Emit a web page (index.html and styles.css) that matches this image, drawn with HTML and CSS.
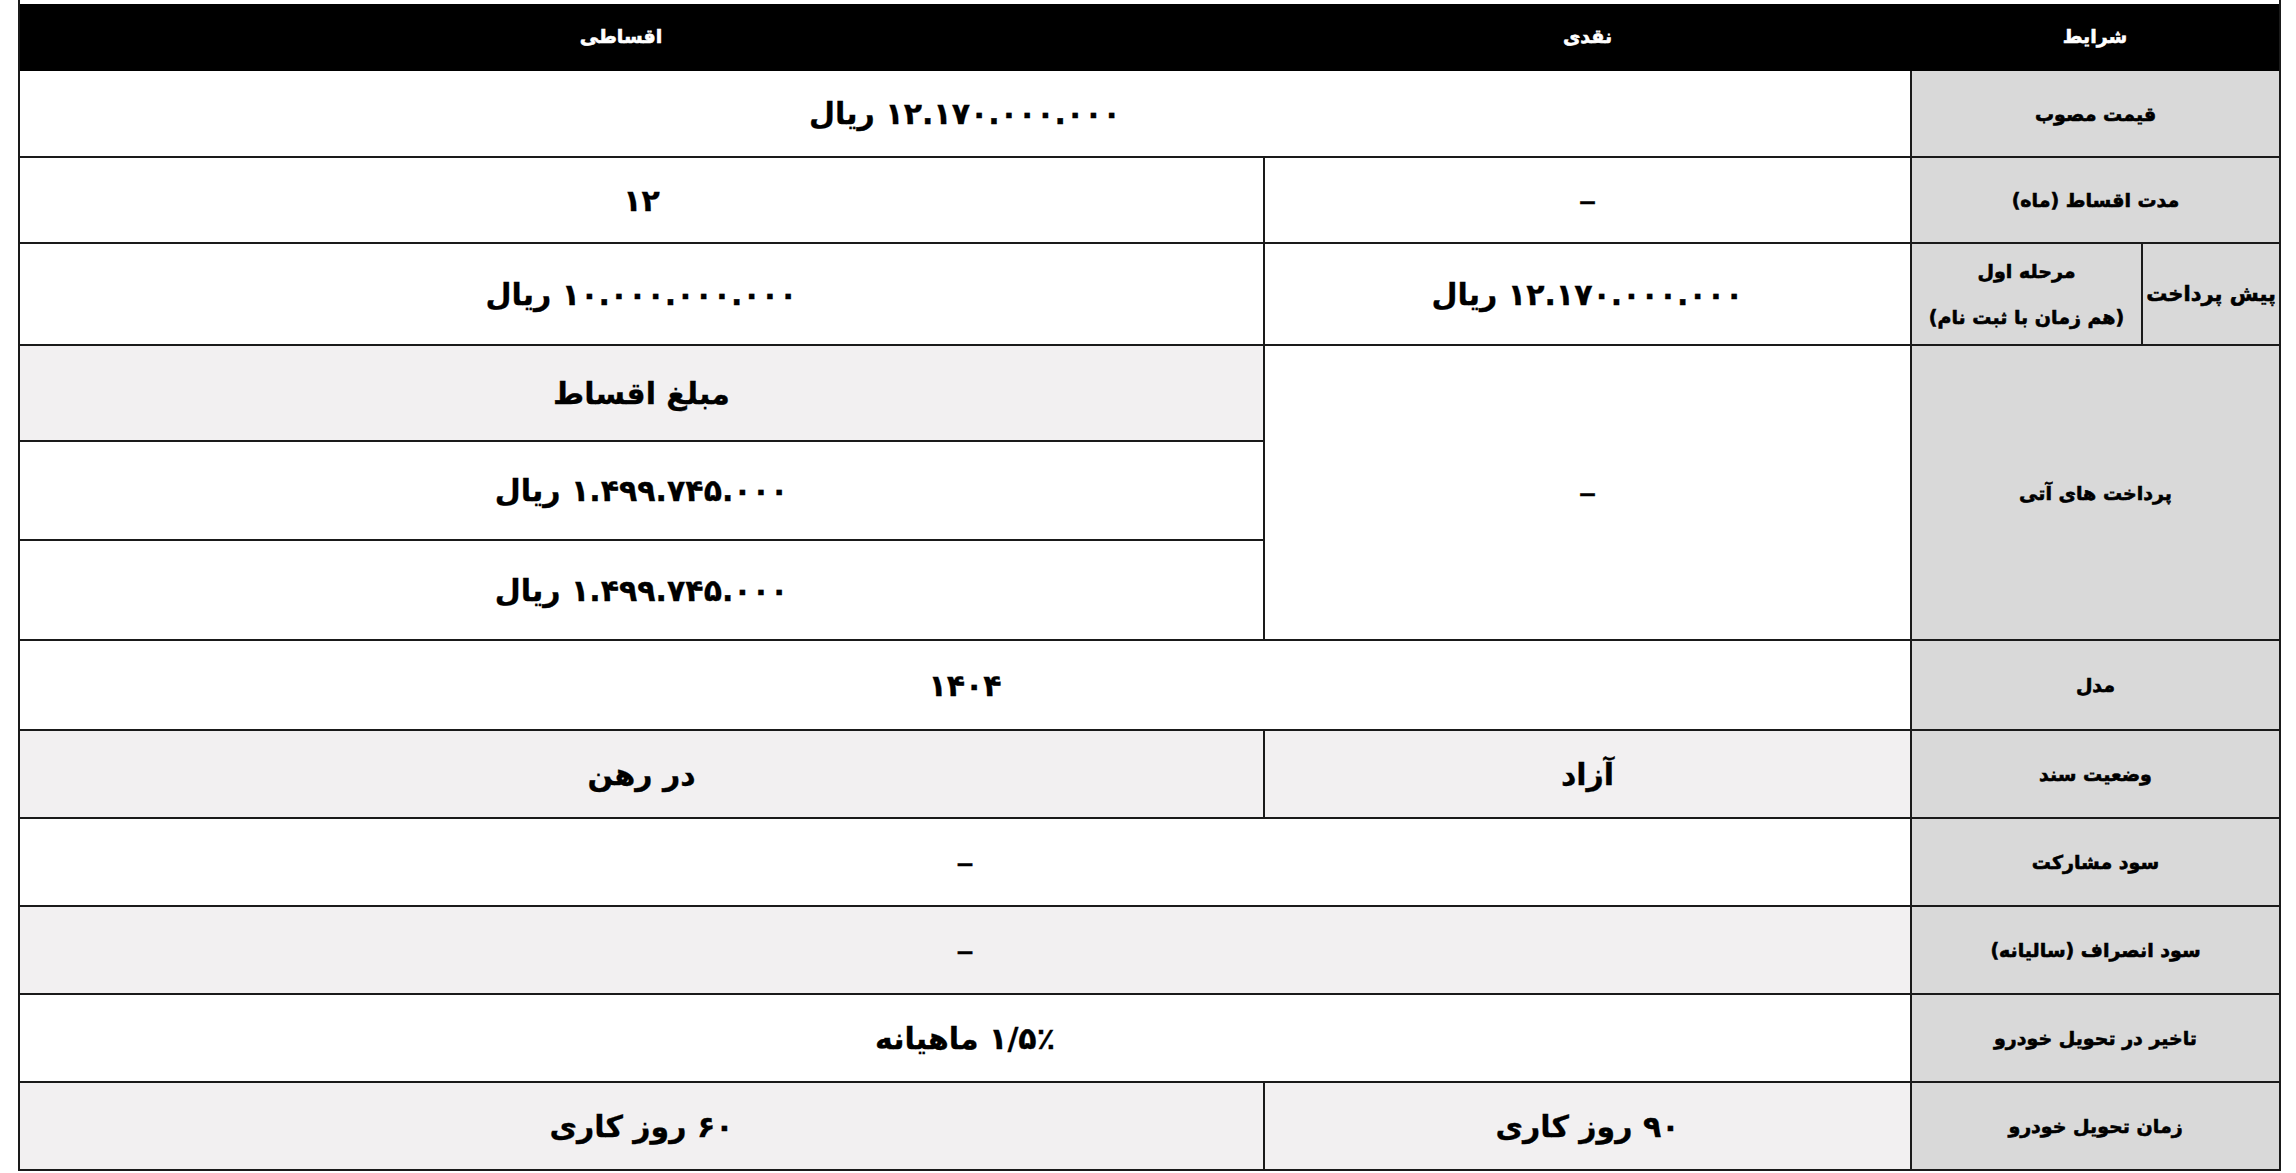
FILE: index.html
```html
<!DOCTYPE html>
<html lang="fa" dir="rtl">
<head>
<meta charset="utf-8">
<title>شرایط فروش</title>
<link rel="stylesheet" href="styles.css">
</head>
<body>
<div class="sheet">
  <table class="terms">
    <colgroup>
      <col class="c-outer">
      <col class="c-inner">
      <col class="c-cash">
      <col class="c-inst">
    </colgroup>
    <thead>
      <tr class="r-head">
        <th colspan="2">شرایط</th>
        <th>نقدی</th>
        <th class="h-inst">اقساطی</th>
      </tr>
    </thead>
    <tbody>
      <tr class="r-86">
        <td class="label" colspan="2">قیمت مصوب</td>
        <td class="val" colspan="2">۱۲.۱۷۰.۰۰۰.۰۰۰ ریال</td>
      </tr>
      <tr class="r-86">
        <td class="label" colspan="2">مدت اقساط (ماه)</td>
        <td class="val dash">–</td>
        <td class="val">۱۲</td>
      </tr>
      <tr class="r-102">
        <td class="label big">پیش پرداخت</td>
        <td class="label two">مرحله اول<br>(هم زمان با ثبت نام)</td>
        <td class="val">۱۲.۱۷۰.۰۰۰.۰۰۰ ریال</td>
        <td class="val">۱۰.۰۰۰.۰۰۰.۰۰۰ ریال</td>
      </tr>
      <tr class="r-96">
        <td class="label" colspan="2" rowspan="3">پرداخت های آتی</td>
        <td class="val dash" rowspan="3">–</td>
        <td class="val shade">مبلغ اقساط</td>
      </tr>
      <tr class="r-99">
        <td class="val">۱.۴۹۹.۷۴۵.۰۰۰ ریال</td>
      </tr>
      <tr class="r-100">
        <td class="val">۱.۴۹۹.۷۴۵.۰۰۰ ریال</td>
      </tr>
      <tr class="r-90">
        <td class="label" colspan="2">مدل</td>
        <td class="val" colspan="2">۱۴۰۴</td>
      </tr>
      <tr class="r-88 alt">
        <td class="label" colspan="2">وضعیت سند</td>
        <td class="val">آزاد</td>
        <td class="val">در رهن</td>
      </tr>
      <tr class="r-88">
        <td class="label" colspan="2">سود مشارکت</td>
        <td class="val dash" colspan="2">–</td>
      </tr>
      <tr class="r-88 alt">
        <td class="label" colspan="2">سود انصراف (سالیانه)</td>
        <td class="val dash" colspan="2">–</td>
      </tr>
      <tr class="r-88">
        <td class="label" colspan="2">تاخیر در تحویل خودرو</td>
        <td class="val" colspan="2">۱/۵٪ ماهیانه</td>
      </tr>
      <tr class="r-88 alt">
        <td class="label" colspan="2">زمان تحویل خودرو</td>
        <td class="val">۹۰ روز کاری</td>
        <td class="val">۶۰ روز کاری</td>
      </tr>
    </tbody>
  </table>
</div>
</body>
</html>
```

FILE: styles.css
```css
html, body {
  margin: 0;
  padding: 0;
  background: #ffffff;
}

body {
  font-family: "DejaVu Sans", "Noto Sans", sans-serif;
  color: #000;
}

.sheet {
  margin: 0 15px 0 18px;
  padding-top: 4px;
  border-left: 2px solid #1a1a1a;
  border-right: 2px solid #1a1a1a;
  box-sizing: border-box;
}

.terms {
  width: 100%;
  border-collapse: collapse;
  table-layout: fixed;
  direction: rtl;
}

.c-outer { width: 137px; }
.c-inner { width: 231px; }
.c-cash { width: 647px; }
.c-inst { width: auto; }

.terms th {
  background: #000;
  color: #fff;
  font-weight: bold;
  font-size: 19px;
  -webkit-text-stroke: 0.6px #fff;
  text-align: center;
  vertical-align: middle;
  padding: 0 0 4px;
  border: 0;
}

.terms th.h-inst {
  padding-right: 42px;
}

.terms td {
  border: 2px solid #1a1a1a;
  text-align: center;
  vertical-align: middle;
  padding: 0;
}

.terms tbody tr:first-child td { border-top: 0; }
.terms td:first-child { border-right: 0; }
.terms tr td:last-child { border-left: 0; }

.label {
  background: #d9d9d9;
  font-weight: bold;
  font-size: 19px;
  -webkit-text-stroke: 0.6px #000;
  white-space: nowrap;
}

.label.big {
  font-size: 21px;
}

.label.two {
  line-height: 46px;
}

.val {
  background: #ffffff;
  font-weight: bold;
  font-size: 30px;
  -webkit-text-stroke: 0.3px #000;
}

.val.dash {
  font-weight: normal;
  -webkit-text-stroke: 0.4px #000;
  font-size: 36px;
}

.alt .val,
.val.shade {
  background: #f2f0f1;
}

.r-head { height: 67px; }
.r-86 { height: 86px; }
.r-102 { height: 102px; }
.r-96 { height: 96px; }
.r-99 { height: 99px; }
.r-100 { height: 100px; }
.r-90 { height: 90px; }
.r-88 { height: 88px; }
```
